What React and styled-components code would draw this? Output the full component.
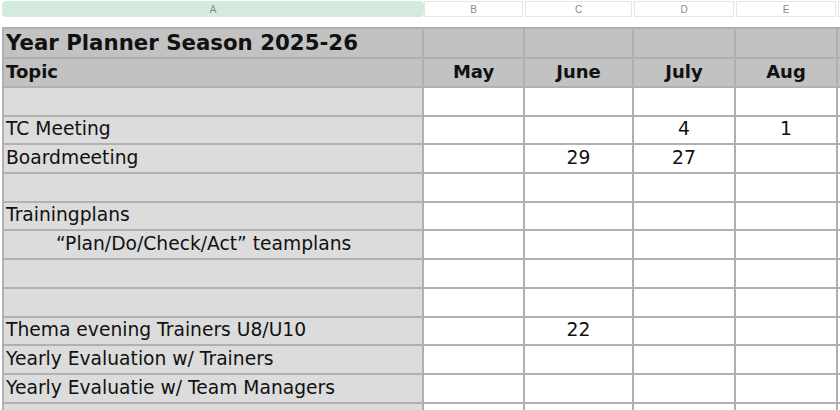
import React from 'react';
import styled, { createGlobalStyle } from 'styled-components';

const GlobalStyle = createGlobalStyle`
  html, body {
    margin: 0;
    padding: 0;
    background: #fff;
    overflow: hidden;
  }
`;

const COLS = '418px 99px 107px 100px 100px 100px';

const Page = styled.div`
  width: 840px;
  height: 410px;
  overflow: hidden;
  padding: 1px 0 0 2px;
  box-sizing: border-box;
`;

const LetterBar = styled.div`
  display: grid;
  grid-template-columns: ${COLS};
  column-gap: 2px;
  padding: 0 2px;
  height: 16px;
  margin-bottom: 10px;
`;

const Letter = styled.div`
  display: flex;
  align-items: center;
  justify-content: center;
  font-family: "Liberation Sans", Arial, sans-serif;
  font-size: 10px;
  color: #8a8a8a;
  box-sizing: border-box;
  background: ${p => (p.$active ? '#d3ebdc' : '#fff')};
  border: 1px solid ${p => (p.$active ? '#d3ebdc' : '#e6e6e6')};
  border-radius: ${p => (p.$active ? '4px' : '0')};
  margin: ${p => (p.$active ? '0 -2px 0 -2px' : '0')};
`;

const Sheet = styled.div`
  display: grid;
  grid-template-columns: ${COLS};
  grid-template-rows: 28px 27px;
  grid-auto-rows: 26.7px;
  gap: 2px;
  padding: 2px;
  background: #b0b0b0;
  width: max-content;
  font-family: "DejaVu Sans", Verdana, sans-serif;
  color: #111;
`;

const Cell = styled.div`
  display: flex;
  align-items: flex-end;
  justify-content: ${p => (p.$center ? 'center' : 'flex-start')};
  padding: 0 2px 3px 2px;
  box-sizing: border-box;
  overflow: hidden;
  white-space: pre;
  font-size: ${p => (p.$bold ? '18px' : '18.7px')};
  font-weight: ${p => (p.$bold ? 700 : 400)};
  line-height: 22px;
  background: ${p =>
    p.$kind === 'head' ? '#c1c2c1' : p.$kind === 'topic' ? '#dcdcdc' : '#fff'};
`;

const Title = styled(Cell)`
  font-size: 21.3px;
  line-height: 26px;
  padding-bottom: 1px;
`;

const Indent = styled.span`
  padding-left: 50px;
`;

const months = ['May', 'June', 'July', 'Aug', ''];

const rows = [
  ['', '', '', '', '', ''],
  ['TC Meeting', '', '', '4', '1', ''],
  ['Boardmeeting', '', '29', '27', '', ''],
  ['', '', '', '', '', ''],
  ['Trainingplans', '', '', '', '', ''],
  [<Indent>{'\u201CPlan/Do/Check/Act\u201D teamplans'}</Indent>, '', '', '', '', ''],
  ['', '', '', '', '', ''],
  ['', '', '', '', '', ''],
  ['Thema evening Trainers U8/U10', '', '22', '', '', ''],
  ['Yearly Evaluation w/ Trainers', '', '', '', '', ''],
  ['Yearly Evaluatie w/ Team Managers', '', '', '', '', ''],
  ['', '', '', '', '', ''],
];

export default function App() {
  return (
    <Page>
      <GlobalStyle />
      <LetterBar>
        {['A', 'B', 'C', 'D', 'E', ''].map((l, i) => (
          <Letter key={i} $active={i === 0}>{l}</Letter>
        ))}
      </LetterBar>
      <Sheet>
        <Title $kind="head" $bold>Year Planner Season 2025-26</Title>
        {months.map((m, i) => <Cell key={'h' + i} $kind="head" />)}
        <Cell $kind="head" $bold>Topic</Cell>
        {months.map((m, i) => (
          <Cell key={'m' + i} $kind="head" $bold $center>{m}</Cell>
        ))}
        {rows.map((r, ri) =>
          r.map((v, ci) => (
            <Cell key={ri + '-' + ci} $kind={ci === 0 ? 'topic' : 'data'} $center={ci > 0}>
              {v}
            </Cell>
          ))
        )}
      </Sheet>
    </Page>
  );
}
